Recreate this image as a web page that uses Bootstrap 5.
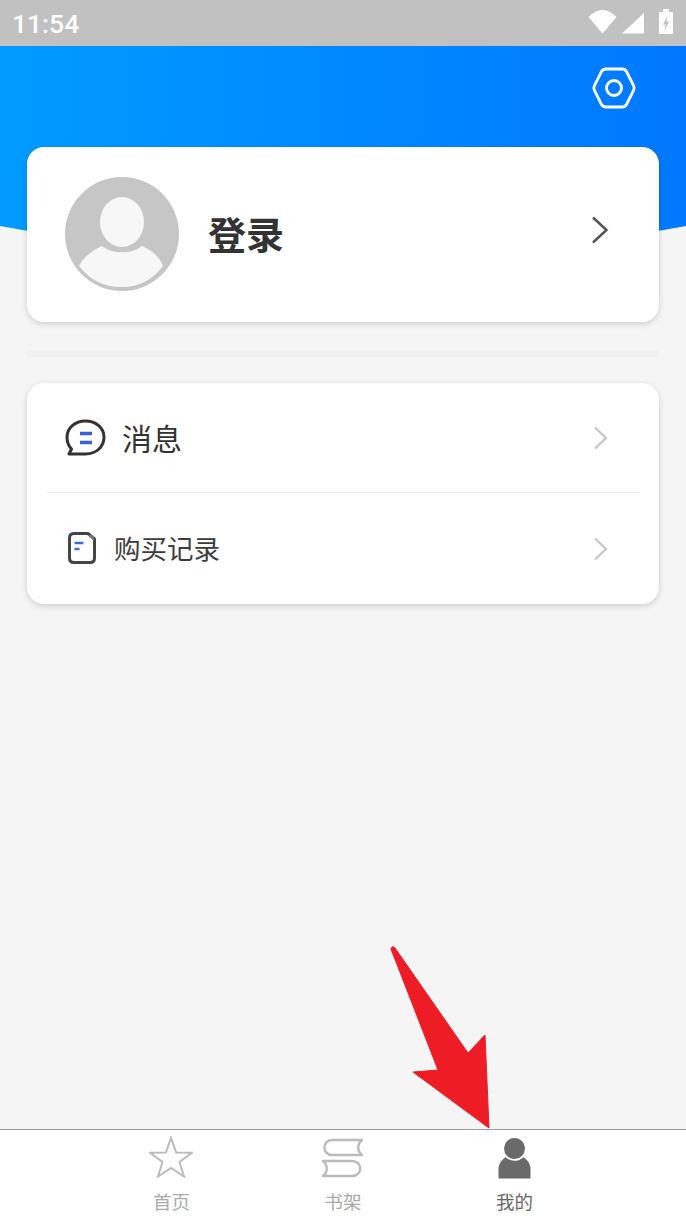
<!DOCTYPE html>
<html lang="zh">
<head>
<meta charset="utf-8">
<title>我的</title>
<link href="https://cdn.jsdelivr.net/npm/bootstrap@5.3.0/dist/css/bootstrap.min.css" rel="stylesheet">
<style>
html,body{height:1219px;overflow:hidden}
body{background:#f5f5f5;font-family:"Noto Sans CJK SC","Noto Sans",sans-serif;color:#333}
svg{display:block;flex:none}
.shell{height:1219px;position:relative}
.sbar{height:46px;background:#c1c1c1;color:#fff;font-family:Roboto,sans-serif;font-size:26.5px;font-weight:500;line-height:46px;padding-left:12px;padding-right:12px}
.stime{position:relative;top:1px}
.stage{position:relative;min-height:0;padding:0 27px}
.wave{position:absolute;left:0;top:0;width:686px;height:200px}
.toprow{position:relative;height:101px;padding-top:21px}
.gear{margin-right:22px}
.pcard{position:relative;background:#fff;border:0;border-radius:17px;box-shadow:0 2px 6px rgba(0,0,0,.16)}
.logcard{height:175px;padding:30px 50px 0 38px;align-items:flex-start}
.logname{font-size:38px;font-weight:700;line-height:54px;margin-left:29px;margin-top:29px;color:#333}
.logchev{margin-left:auto;margin-top:39px}
.rule{position:relative;height:7px;background:#f0f0f1;margin-top:28px;margin-bottom:26px;border-radius:3px}
.menucard{height:221px;padding:0 19px}
.mrow{height:110px;padding:0 32px 0 19px}
.mrow:first-child{height:109px}
.mrow+.mrow{border-top:1px solid #eee}
.m1{font-size:30px;line-height:40px;margin-left:16px;margin-bottom:2px;color:#333}
.m2{font-size:26.5px;line-height:40px;margin-left:18px;color:#3c3c3c}
.docic{margin-left:3px}
.mchev{margin-left:auto}
.mrow+.mrow .mchev{margin-top:3px}
.tabbar{position:relative;height:90px;background:#fff;border-top:1px solid #999;padding:0 12.5%}
.tabcell{width:33.333%;height:89px;padding-top:6px}
.ticon{height:42px}
.tnudge{margin-top:2px}
.tlabel{font-size:18.5px;line-height:26px;margin-top:10px;color:#aaa}
.tlabel.on{color:#666}
.arrow{position:absolute;left:380px;top:935px;z-index:5}
</style>
</head>
<body>
<div class="shell d-flex flex-column">
  <div class="sbar d-flex justify-content-between align-items-center">
    <span class="stime">11:54</span>
    <svg width="88" height="28" viewBox="0 0 88 28" aria-hidden="true">
      <path d="M2.500 8 Q16.500 -6 30.500 8 L16.500 24.500 Z" fill="#fff"/>
      <path d="M36 24.500 L58 4 V24.500 Z" fill="#fff"/>
      <path d="M74 3 H77 V0 H83 V3 H86 Q87 3 87 4 V24 Q87 25 86 25 H74 Q73 25 73 24 V4 Q73 3 74 3 Z" fill="#fff"/>
      <path d="M81.500 6.500 L77 15.500 H79.500 L78.500 22 L83 12.500 H80.500 Z" fill="#c1c1c1"/>
    </svg>
  </div>
  <div class="stage flex-grow-1">
    <svg class="wave" viewBox="0 0 686 200" preserveAspectRatio="none" aria-hidden="true">
      <defs><linearGradient id="hg" x1="0" y1="0" x2="1" y2="0"><stop offset="0" stop-color="#019bff"/><stop offset="1" stop-color="#0078ff"/></linearGradient></defs>
      <path d="M0 0 H686 V180 Q343 244 0 180 Z" fill="url(#hg)"/>
    </svg>
    <div class="toprow d-flex justify-content-end">
      <svg class="gear" width="46" height="42" viewBox="0 0 46 42" aria-hidden="true">
        <path d="M15 2 H31 Q34 2 35.500 4.500 L42.500 18.500 Q43.800 21 42.500 23.500 L35.500 37.500 Q34 40 31 40 H15 Q12 40 10.500 37.500 L3.500 23.500 Q2.200 21 3.500 18.500 L10.500 4.500 Q12 2 15 2 Z" fill="none" stroke="#fff" stroke-width="2.800"/>
        <circle cx="23" cy="21" r="7.500" fill="none" stroke="#fff" stroke-width="2.800"/>
      </svg>
    </div>
    <div class="card pcard logcard d-flex flex-row">
      <svg width="114" height="114" viewBox="0 0 114 114" aria-hidden="true">
        <circle cx="57" cy="57" r="57" fill="#c6c6c6"/>
        <ellipse cx="57" cy="45" rx="22" ry="25" fill="#f7f7f7"/>
        <path d="M14 89 Q20 77 37 69 Q46 76 57 75 Q68 76 77 69 Q93 76 98 89 Q82 110 57 110 Q30 110 14 89 Z" fill="#f7f7f7"/>
      </svg>
      <div class="logname">登录</div>
      <svg class="logchev" width="18" height="28" viewBox="0 0 18 28" aria-hidden="true"><path d="M2 1.500 L15.500 14 L2 26.500" fill="none" stroke="#555" stroke-width="2.500"/></svg>
    </div>
    <div class="rule"></div>
    <div class="card pcard menucard">
      <div class="mrow d-flex align-items-center">
        <svg width="41" height="38" viewBox="0 0 41 38" aria-hidden="true">
          <path d="M20.500 2 C31 2 39 9 39 18 C39 28 31 35 20.500 35 H4 L6.500 30 C3.500 27 2 23 2 18 C2 9 10 2 20.500 2 Z" fill="none" stroke="#333" stroke-width="3" stroke-linejoin="round"/>
          <path d="M15 14.500 H27 M15 23.500 H27" stroke="#3a5fd9" stroke-width="3.500"/>
        </svg>
        <div class="m1">消息</div>
        <svg class="mchev" width="15" height="24" viewBox="0 0 15 24" aria-hidden="true"><path d="M2 1.500 L13 12 L2 22.500" fill="none" stroke="#c6c6c6" stroke-width="2.200"/></svg>
      </div>
      <div class="mrow d-flex align-items-center">
        <svg class="docic" width="28" height="32" viewBox="0 0 28 32" aria-hidden="true">
          <path d="M6 1.500 H20 L26.500 7 V26 Q26.500 30.500 22 30.500 H6 Q1.500 30.500 1.500 26 V6 Q1.500 1.500 6 1.500 Z" fill="none" stroke="#444" stroke-width="3" stroke-linejoin="round"/>
          <path d="M20 3 H23 Q26 3 26 6 V9 Z" fill="#777"/>
          <path d="M6.500 11 H15.500 M6.500 17 H11.500" stroke="#3a6fd9" stroke-width="2.500"/>
        </svg>
        <div class="m2">购买记录</div>
        <svg class="mchev" width="15" height="24" viewBox="0 0 15 24" aria-hidden="true"><path d="M2 1.500 L13 12 L2 22.500" fill="none" stroke="#c6c6c6" stroke-width="2.200"/></svg>
      </div>
    </div>
  </div>
  <div class="tabbar d-flex">
    <div class="tabcell d-flex flex-column align-items-center">
      <div class="ticon">
        <svg width="44" height="42" viewBox="1 0 44 42" aria-hidden="true"><path d="M23 2 L28.200 16.500 L44 16.800 L31.500 26 L36 40.500 L23 32 L10 40.500 L14.500 26 L2 16.800 L17.800 16.500 Z" fill="none" stroke="#bbb" stroke-width="2"/></svg>
      </div>
      <div class="tlabel">首页</div>
    </div>
    <div class="tabcell d-flex flex-column align-items-center">
      <div class="ticon">
        <svg class="tnudge" width="43" height="40" viewBox="0 0 43 40" aria-hidden="true">
          <path d="M41 2 H11 C1 2 1 17 11 17 H41 C36 13 36 6 41 2 Z" fill="none" stroke="#bbb" stroke-width="2.400" stroke-linejoin="round"/>
          <path d="M2 23 H31 C42 23 42 38 31 38 H2 C7 34 7 27 2 23 Z" fill="none" stroke="#bbb" stroke-width="2.400" stroke-linejoin="round"/>
        </svg>
      </div>
      <div class="tlabel">书架</div>
    </div>
    <div class="tabcell d-flex flex-column align-items-center">
      <div class="ticon">
        <svg class="tnudge" width="33" height="41" viewBox="0 0 33 41" aria-hidden="true">
          <path d="M0.500 40.500 V31 C0.500 25 5 20 10 18 H23 C28 20 32.500 25 32.500 31 V40.500 Z" fill="#6a6a6a"/>
          <circle cx="16.500" cy="10.500" r="12.300" fill="#fff"/>
          <circle cx="16.500" cy="10.500" r="10.500" fill="#6a6a6a"/>
        </svg>
      </div>
      <div class="tlabel on">我的</div>
    </div>
  </div>
  <svg class="arrow" width="112" height="196" viewBox="0 0 112 196" aria-hidden="true">
    <path d="M11 14 Q12 10 15 13 L88 118 L105 100 L109 193 L33 137 L58 135 Z" fill="#ee1c25" stroke="#ee1c25" stroke-width="1" stroke-linejoin="round"/>
  </svg>
</div>
</body>
</html>
